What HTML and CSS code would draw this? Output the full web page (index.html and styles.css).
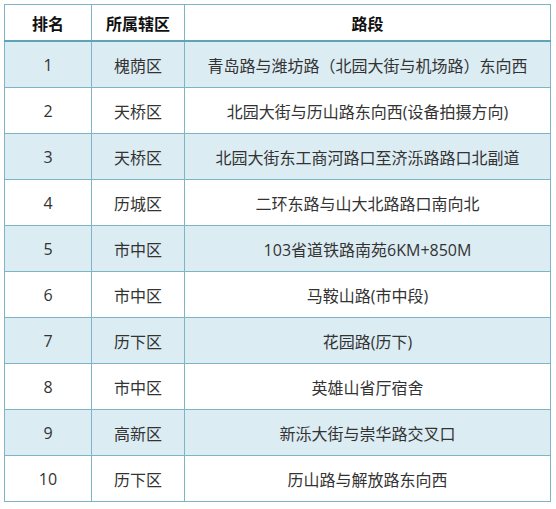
FILE: index.html
```html
<!DOCTYPE html>
<html lang="zh">
<head>
<meta charset="utf-8">
<link rel="stylesheet" href="styles.css">
</head>
<body>
<table class="rank-table">
  <colgroup>
    <col class="c-rank">
    <col class="c-area">
    <col class="c-road">
  </colgroup>
  <thead>
    <tr><th>排名</th><th>所属辖区</th><th>路段</th></tr>
  </thead>
  <tbody>
    <tr class="odd"><td>1</td><td>槐荫区</td><td>青岛路与潍坊路（北园大街与机场路）东向西</td></tr>
    <tr><td>2</td><td>天桥区</td><td>北园大街与历山路东向西(设备拍摄方向)</td></tr>
    <tr class="odd"><td>3</td><td>天桥区</td><td>北园大街东工商河路口至济泺路路口北副道</td></tr>
    <tr><td>4</td><td>历城区</td><td>二环东路与山大北路路口南向北</td></tr>
    <tr class="odd"><td>5</td><td>市中区</td><td>103省道铁路南苑6KM+850M</td></tr>
    <tr><td>6</td><td>市中区</td><td>马鞍山路(市中段)</td></tr>
    <tr class="odd"><td>7</td><td>历下区</td><td>花园路(历下)</td></tr>
    <tr><td>8</td><td>市中区</td><td>英雄山省厅宿舍</td></tr>
    <tr class="odd"><td>9</td><td>高新区</td><td>新泺大街与崇华路交叉口</td></tr>
    <tr><td>10</td><td>历下区</td><td>历山路与解放路东向西</td></tr>
  </tbody>
</table>
</body>
</html>
```
FILE: styles.css
```css
html, body {
  margin: 0;
  padding: 0;
  background: #ffffff;
}
body {
  padding: 4px 0 0 4px;
  font-family: "Open Sans", "Noto Sans CJK SC", sans-serif;
}
.rank-table {
  border-collapse: collapse;
  width: 546px;
  table-layout: fixed;
  border: 1px solid #7eb5c5;
}
.c-rank { width: 87px; }
.c-area { width: 93px; }
.c-road { width: 366px; }
.rank-table th,
.rank-table td {
  border: 1px solid #7eb5c5;
  text-align: center;
  padding: 0;
  white-space: nowrap;
}
.rank-table th {
  height: 35px;
  font-size: 16px;
  font-weight: bold;
  color: #111;
  border-bottom: 2px solid #5fa4b6;
}
.rank-table td {
  height: 45px;
  font-size: 16px;
  color: #333;
}
.rank-table tr.odd td {
  background: #dcecf3;
}
```
